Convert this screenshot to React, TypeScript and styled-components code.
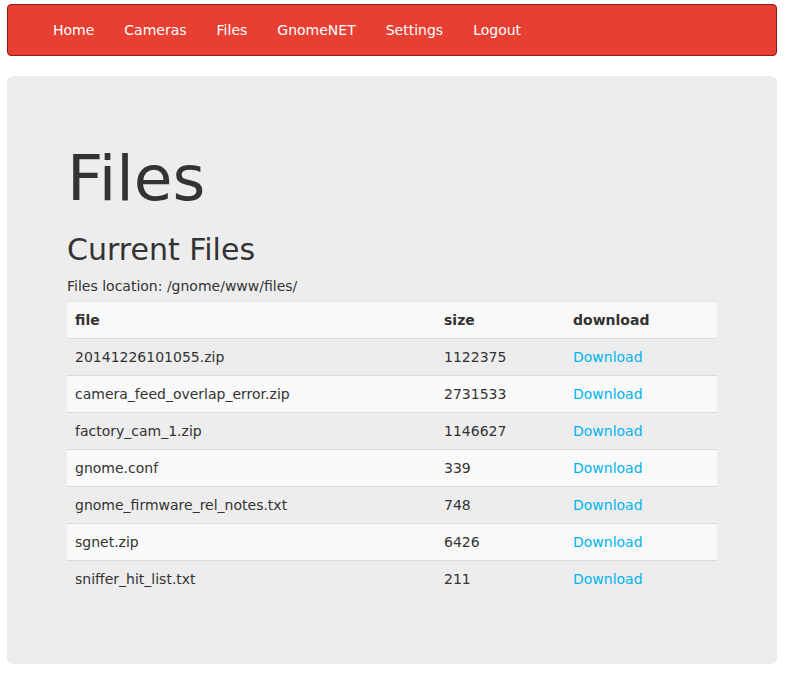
import React from "react";
import styled, { createGlobalStyle } from "styled-components";

const Global = createGlobalStyle`
  body { margin: 0; background: #fff; font-family: "DejaVu Sans", sans-serif; font-size: 14px; line-height: 20px; color: #333; }
`;

const Page = styled.div`
  width: 770px;
  margin: 4px 0 0 7px;
`;

const Navbar = styled.nav`
  height: 50px;
  background: #e74033;
  border: 1px solid #8c1d12;
  border-radius: 4px;
  display: flex;
  align-items: center;
  padding-left: 30px;
`;

const NavLink = styled.a`
  color: #fff;
  text-decoration: none;
  padding: 0 15px;
  font-size: 14px;
`;

const Jumbotron = styled.div`
  margin-top: 20px;
  background: #ededed;
  border-radius: 6px;
  padding: 48px 60px 48px;
`;

const Title = styled.h1`
  font-size: 63px;
  line-height: 1.1;
  font-weight: 400;
  margin: 20px 0 10px;
`;

const Subtitle = styled.h2`
  font-size: 30px;
  line-height: 33px;
  font-weight: 400;
  margin: 20px 0 10px;
`;

const Location = styled.p`
  margin: 0 0 5px;
`;

const Table = styled.table`
  width: 650px;
  border-collapse: collapse;
  margin-bottom: 19px;
`;

const Row = styled.tr<{ $light: boolean }>`
  background: ${(p) => (p.$light ? "#f9f9f9" : "transparent")};
`;

const Cell = styled.td<{ $w?: number }>`
  padding: 8px;
  border-top: 1px solid #dcdcdc;
  text-align: left;
  ${(p) => (p.$w ? `width: ${p.$w}px;` : "")}
`;

const Head = styled(Cell).attrs({ as: "th" })`
  font-weight: bold;
  border-top: 1px solid #e4e4e4;
`;

const Link = styled.a`
  color: #00b4f0;
  text-decoration: none;
`;

const files: [string, number][] = [
  ["20141226101055.zip", 1122375],
  ["camera_feed_overlap_error.zip", 2731533],
  ["factory_cam_1.zip", 1146627],
  ["gnome.conf", 339],
  ["gnome_firmware_rel_notes.txt", 748],
  ["sgnet.zip", 6426],
  ["sniffer_hit_list.txt", 211],
];

export default function App() {
  return (
    <Page>
      <Global />
      <Navbar>
        {["Home", "Cameras", "Files", "GnomeNET", "Settings", "Logout"].map((l) => (
          <NavLink key={l} href="#">{l}</NavLink>
        ))}
      </Navbar>
      <Jumbotron>
        <Title>Files</Title>
        <Subtitle>Current Files</Subtitle>
        <Location>Files location: /gnome/www/files/</Location>
        <Table>
          <thead>
            <Row $light>
              <Head $w={353}>file</Head>
              <Head $w={113}>size</Head>
              <Head>download</Head>
            </Row>
          </thead>
          <tbody>
            {files.map(([name, size], i) => (
              <Row key={name} $light={i % 2 === 1}>
                <Cell>{name}</Cell>
                <Cell>{size}</Cell>
                <Cell><Link href="#">Download</Link></Cell>
              </Row>
            ))}
          </tbody>
        </Table>
      </Jumbotron>
    </Page>
  );
}
